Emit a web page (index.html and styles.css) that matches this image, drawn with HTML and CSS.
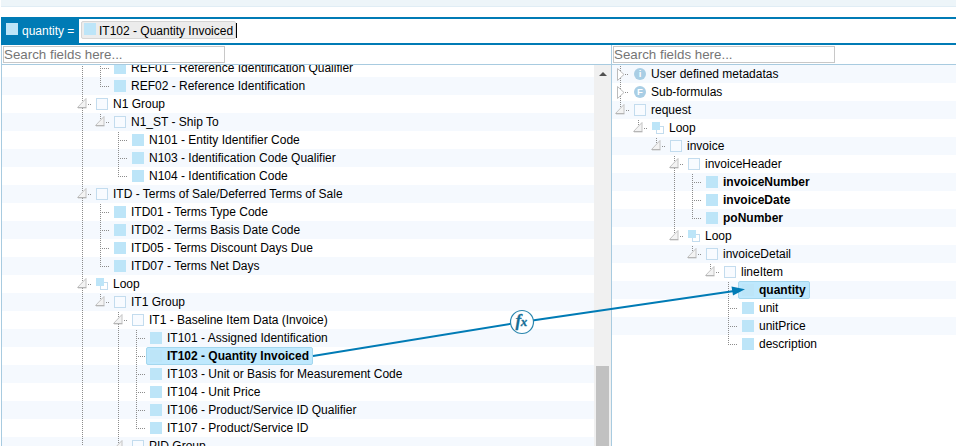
FILE: index.html
```
<!DOCTYPE html>
<html lang="en">
<head>
<meta charset="utf-8">
<title>Mapping editor</title>
<link rel="stylesheet" href="styles.css">
</head>
<body>
<div class="app">
  <div class="strip"></div>
  <div class="formula">
    <div class="target"><i class="field"></i><span class="target-name">quantity =</span></div>
    <div class="expression"><span class="chip"><i class="field"></i><span class="chip-name">IT102 - Quantity Invoiced</span></span><span class="caret"></span></div>
  </div>
  <div class="panes">
    <section class="pane source">
      <div class="search"><input type="text" placeholder="Search fields here..."></div>
      <div class="body">
        <div class="tree scrolled" id="source"></div>
        <div class="scrollbar"><span class="up"></span><span class="thumb"></span></div>
      </div>
    </section>
    <section class="pane dest">
      <div class="search"><input type="text" placeholder="Search fields here..."></div>
      <div class="body"><div class="tree" id="dest"></div></div>
    </section>
  </div>
  <svg class="link" width="956" height="446" viewBox="0 0 956 446">
    <path d="M313 356L522 322L736 290.7" fill="none" stroke="#007bb5" stroke-width="2"/>
    <path d="M745 289.3L731.5 286.6L733 295.4Z" fill="#007bb5"/>
    <circle cx="522" cy="322" r="11.5" fill="#fff" stroke="#2a86ae" stroke-width="1.2"/>
    <text class="fx" x="515.5" y="326">f<tspan class="fx-x" dx="-0.3">x</tspan></text>
  </svg>
</div>
<script src="tree.js"></script>
</body>
</html>
```
FILE: styles.css
```
* { box-sizing: border-box; }
body { margin: 0; background: #fff; font: 12px/18px "Liberation Sans", Arial, sans-serif; color: #000; }
.app { position: relative; width: 956px; height: 446px; overflow: hidden; padding-left: 1px; display: flex; flex-direction: column; }
.strip { height: 7px; margin-bottom: 10px; background: #edf5f9; border-bottom: 1px solid #e0edf5; flex: none; }
.formula { display: flex; flex: none; height: 28px; border: solid #007bb5; border-width: 2px 0; }
.target { width: 78px; flex: none; background: #007bb5; color: #fff; display: flex; padding: 4px 0 0 5px; }
.field { display: block; flex: none; width: 12px; height: 12px; background: #bde5f8; }
.target-name { margin: -1px 0 0 4px; font-size: 12px; line-height: 18px; white-space: nowrap; }
.expression { display: flex; padding: 2px; }
.chip { display: flex; height: 18px; background: #ececec; border: 1px solid #d5d5d5; border-radius: 2px; padding: 1px 2px 0; width: 155px; }
.chip-name { margin: -1px 0 0 3px; white-space: nowrap; font-size: 12px; line-height: 18px; }
.caret { width: 1px; height: 15px; margin-top: 2px; background: #000; }
.panes { display: flex; flex: 1; min-height: 0; }
.pane { display: flex; flex-direction: column; border-left: 1px solid #a8cbe0; min-width: 0; }
.source { width: 610px; }
.dest { flex: 1; }
.search { height: 20px; flex: none; padding: 1px; border-bottom: 1px solid #a8cbe0; }
.search input { display: block; width: 222px; height: 17px; padding: 0; border: 1px solid #c8c8c8; font: 13.33px "Liberation Sans", Arial, sans-serif; outline: 0; }
.search input::placeholder { color: #757575; opacity: 1; }
.body { display: flex; flex: 1; min-height: 0; overflow: hidden; }
.tree { flex: 1; min-width: 0; }
.scrolled { margin-top: -6px; }
.scrollbar { width: 17px; background: #f0f0f0; flex: none; display: flex; flex-direction: column; align-items: center; }
.up { width: 0; height: 0; margin-top: 7px; border: 4px solid transparent; border-top: 0; border-bottom: 4px solid #505050; }
.thumb { width: 13px; flex: 1; margin-top: 290px; background: #c1c1c1; }
.row { display: flex; height: 18px; }
.source .row:nth-child(even), .dest .row:nth-child(odd) { background: #f5f9fe; }
.cell { display: block; width: 18px; height: 18px; flex: none; }
.node { display: flex; height: 18px; padding: 3px 4px 0; white-space: nowrap; }
.icon { display: block; width: 12px; height: 12px; flex: none; }
.name { margin: -3px 0 0 5px; line-height: 18px; }
.bold { font-weight: bold; }
.selected { background: #bee8fd; border: 1px solid #a4d7ee; border-radius: 2px; padding: 2px 3px 0; }
.link { position: absolute; left: 0; top: 0; pointer-events: none; }
.fx { font: italic bold 17px "Liberation Serif", serif; fill: #176f96; stroke: #176f96; stroke-width: .3px; }
.fx-x { font-size: 13px; }
.badge { font: bold 9.5px "Liberation Sans", sans-serif; fill: #fff; text-anchor: middle; }
```
FILE: tree.js
```
// Guide codes: "." blank, "|" line, "+" branch, "L" last branch, ":" line without a branch stub,
// "o" open with line below, "e" open and last, "c" closed.
const source = [
  ['....|+', 'field', 'REF01 - Reference Identification Qualifier'],
  ['....|L', 'field', 'REF02 - Reference Identification'],
  ['....o', 'group', 'N1 Group'],
  ['....|e', 'group', 'N1_ST - Ship To'],
  ['....|.+', 'field', 'N101 - Entity Identifier Code'],
  ['....|.+', 'field', 'N103 - Identification Code Qualifier'],
  ['....|.L', 'field', 'N104 - Identification Code'],
  ['....o', 'group', 'ITD - Terms of Sale/Deferred Terms of Sale'],
  ['....|+', 'field', 'ITD01 - Terms Type Code'],
  ['....|+', 'field', 'ITD02 - Terms Basis Date Code'],
  ['....|+', 'field', 'ITD05 - Terms Discount Days Due'],
  ['....|L', 'field', 'ITD07 - Terms Net Days'],
  ['....o', 'loop', 'Loop'],
  ['....|e', 'group', 'IT1 Group'],
  ['....|.o', 'group', 'IT1 - Baseline Item Data (Invoice)'],
  ['....|.|+', 'field', 'IT101 - Assigned Identification'],
  ['....|.|+', 'field', 'IT102 - Quantity Invoiced', 'bold selected'],
  ['....|.|+', 'field', 'IT103 - Unit or Basis for Measurement Code'],
  ['....|.|+', 'field', 'IT104 - Unit Price'],
  ['....|.|+', 'field', 'IT106 - Product/Service ID Qualifier'],
  ['....|.|L', 'field', 'IT107 - Product/Service ID'],
  ['....|.o', 'group', 'PID Group']
];
const dest = [
  ['c', 'info', 'User defined metadatas'],
  ['c', 'formula', 'Sub-formulas'],
  ['e', 'group', 'request'],
  ['.e', 'loop', 'Loop'],
  ['..e', 'group', 'invoice'],
  ['...o', 'group', 'invoiceHeader'],
  ['...|+', 'field', 'invoiceNumber', 'bold'],
  ['...|+', 'field', 'invoiceDate', 'bold'],
  ['...|L', 'field', 'poNumber', 'bold'],
  ['...e', 'loop', 'Loop'],
  ['....e', 'group', 'invoiceDetail'],
  ['.....e', 'group', 'lineItem'],
  ['......:', 'field', 'quantity', 'bold selected'],
  ['......+', 'field', 'unit'],
  ['......+', 'field', 'unitPrice'],
  ['......L', 'field', 'description']
];
const dots = d => `<path d="${d}" fill="none" stroke="#8c8c8c" stroke-dasharray="1 1"/>`;
const open = '<path d="M12 3.5V12.5H3.5Z" fill="#f3f3f3" stroke="#c4c4c4" stroke-linejoin="round"/><path d="M4 12.8H12.5" fill="none" stroke="#b0b0b0"/>';
const closed = '<path d="M5.5 3.5L12 9.5L5.5 15.5Z" fill="#fff" stroke="#bcbcbc" stroke-linejoin="round"/>';
const guides = {
  '.': '',
  '|': dots('M8.5 1V18'),
  ':': dots('M8.5 1V18'),
  '+': dots('M8.5 1V18') + dots('M10 9.5H17'),
  'L': dots('M8.5 1V10') + dots('M10 9.5H17'),
  'o': dots('M8.5 1V18') + dots('M14 9.5H18') + open,
  'e': dots('M8.5 1V6') + dots('M14 9.5H18') + open,
  'c': dots('M8.5 1V18') + dots('M13 9.5H17') + closed
};
const box = '<rect x=".5" y=".5" width="11" height="11" fill="#f8fbff" stroke="#c3dcee"/>';
const disc = c => `<circle cx="6" cy="6" r="6" fill="#a9cee5"/><text class="badge" x="6" y="9.4">${c}</text>`;
const icons = {
  field: '<rect width="12" height="12" fill="#bde5f8"/>',
  group: box,
  loop: '<rect x="4.5" y="4.5" width="7" height="7" fill="#fff" stroke="#c3dcee"/><rect width="8" height="8" fill="#bde5f8"/>',
  info: disc('i'),
  formula: disc('F')
};
function render(id, rows) {
  document.getElementById(id).innerHTML = rows.map(([path, icon, name, cls = '']) =>
    `<div class="row">${[...path].map(c => `<svg class="cell" viewBox="0 0 18 18">${guides[c]}</svg>`).join('')}` +
    `<div class="node ${cls}"><svg class="icon" viewBox="0 0 12 12">${icons[icon]}</svg><span class="name">${name}</span></div></div>`
  ).join('');
}
render('source', source);
render('dest', dest);
```
